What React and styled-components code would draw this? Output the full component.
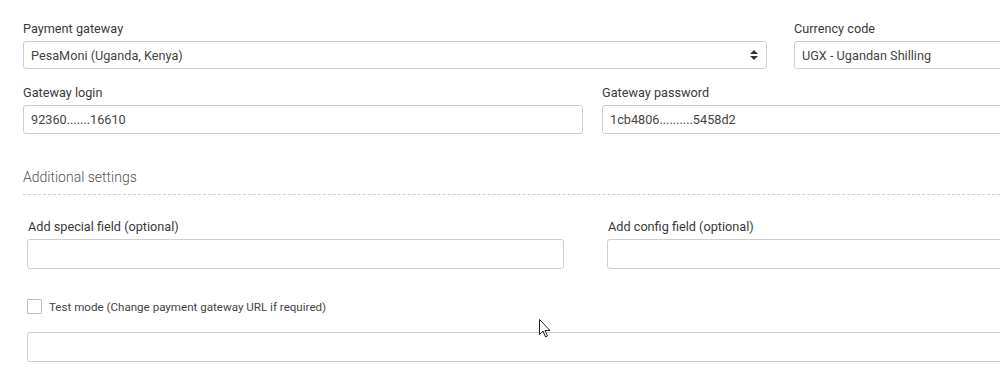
import React from 'react';
import styled, {createGlobalStyle} from 'styled-components';

const GlobalStyle = createGlobalStyle`
    html, body {
        margin: 0;
        padding: 0;
        background: #ffffff;
        overflow: hidden;
    }
    body {
        font-family: Roboto, "Liberation Sans", sans-serif;
        color: #333;
    }
`;

const Page = styled.div`
    position: relative;
    width: 1000px;
    height: 390px;
    overflow: hidden;
`;

const Form = styled.div`
    width: 1120px;
    padding: 20px 0 0 23px;
    box-sizing: border-box;
`;

const Row = styled.div`
    display: grid;
    grid-template-columns: ${props => props.$first}px 1fr;
    column-gap: ${props => props.$gap}px;
    margin-bottom: ${props => props.$bottom || 0}px;
`;

const Field = styled.div`
    display: flex;
    flex-direction: column;
`;

const Label = styled.label`
    font-size: 12.7px;
    line-height: 18px;
    color: #3a3a3a;
    margin-bottom: 3px;
    padding-left: ${props => props.$indent || 0}px;
`;

const Box = styled.div`
    position: relative;
    box-sizing: border-box;
    height: ${props => props.$height || 28}px;
    border: 1px solid #cfcfcf;
    border-radius: 3px;
    background: #fff;
    padding: 0 7px;
    display: flex;
    align-items: center;
    font-size: 12.7px;
    color: #444;
`;

const SelectArrows = styled.svg`
    position: absolute;
    right: 8px;
    top: 50%;
    transform: translateY(-50%);
`;

const SectionTitle = styled.div`
    margin-top: 33px;
    font-size: 14px;
    font-weight: 300;
    color: #555;
    line-height: 20px;
    padding-bottom: 7px;
    border-bottom: 1px dashed #cfcfcf;
`;

const Extra = styled.div`
    padding: 23px 0 0 4px;
`;

const CheckRow = styled.div`
    display: flex;
    align-items: center;
    gap: 7px;
    margin-top: 30px;
    margin-bottom: 18px;
`;

const CheckBox = styled.span`
    display: inline-block;
    box-sizing: border-box;
    width: 15px;
    height: 15px;
    border: 1px solid #bdbdbd;
    border-radius: 1px;
    background: #fff;
`;

const CheckText = styled.span`
    font-size: 11.6px;
    color: #444;
`;

const Cursor = styled.svg`
    position: absolute;
    left: 539px;
    top: 319px;
`;

function SelectBox({value}) {
    return (
        <Box>
            {value}
            <SelectArrows width="8" height="10" viewBox="0 0 8 10">
                <path d="M4 0 L8 4 L0 4 Z" fill="#333" />
                <path d="M0 6 L8 6 L4 10 Z" fill="#333" />
            </SelectArrows>
        </Box>
    );
}

export default function App() {
    return (
        <Page>
            <GlobalStyle />
            <Form>
                <Row $first={744} $gap={27} $bottom={15}>
                    <Field>
                        <Label>Payment gateway</Label>
                        <SelectBox value="PesaMoni (Uganda, Kenya)" />
                    </Field>
                    <Field>
                        <Label>Currency code</Label>
                        <Box>UGX - Ugandan Shilling</Box>
                    </Field>
                </Row>
                <Row $first={560} $gap={19}>
                    <Field>
                        <Label>Gateway login</Label>
                        <Box $height={29}>92360.......16610</Box>
                    </Field>
                    <Field>
                        <Label>Gateway password</Label>
                        <Box $height={29}>1cb4806..........5458d2</Box>
                    </Field>
                </Row>
                <SectionTitle>Additional settings</SectionTitle>
                <Extra>
                    <Row $first={537} $gap={43}>
                        <Field>
                            <Label $indent={1}>Add special field (optional)</Label>
                            <Box $height={30} />
                        </Field>
                        <Field>
                            <Label $indent={1}>Add config field (optional)</Label>
                            <Box $height={30} />
                        </Field>
                    </Row>
                    <CheckRow>
                        <CheckBox />
                        <CheckText>Test mode (Change payment gateway URL if required)</CheckText>
                    </CheckRow>
                    <Box $height={30} />
                </Extra>
            </Form>
            <Cursor width="12" height="19" viewBox="0 0 12 19">
                <path d="M0.5 0.5 L0.5 15.5 L4 12 L6.5 18 L8.5 17 L6 11.5 L11 11.5 Z" fill="#fff" stroke="#222" strokeWidth="1" strokeLinejoin="round" />
            </Cursor>
        </Page>
    );
}
